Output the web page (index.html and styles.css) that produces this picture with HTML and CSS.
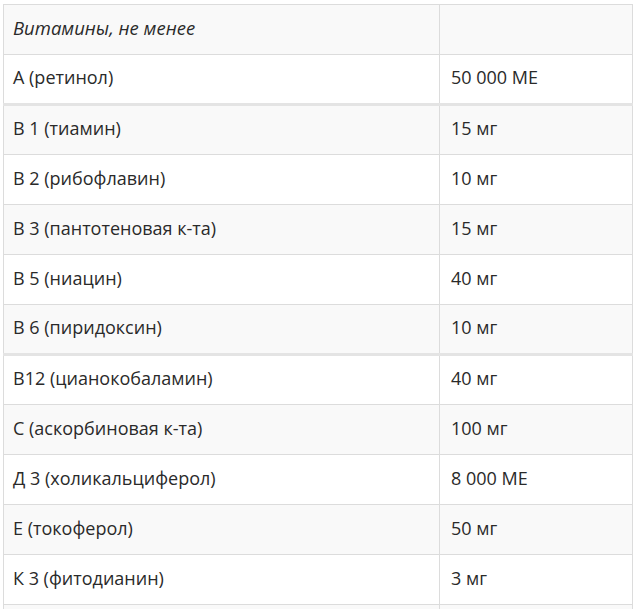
FILE: index.html
```html
<!DOCTYPE html>
<html lang="ru">
<head>
<meta charset="utf-8">
<link rel="stylesheet" href="styles.css">
</head>
<body>
<table class="vit">
<tr class="head"><td class="name"><em>Витамины, не менее</em></td><td class="val"></td></tr>
<tr class="sep"><td class="name">А (ретинол)</td><td class="val">50 000 МЕ</td></tr>
<tr><td class="name">В 1 (тиамин)</td><td class="val">15 мг</td></tr>
<tr><td class="name">В 2 (рибофлавин)</td><td class="val">10 мг</td></tr>
<tr><td class="name">В 3 (пантотеновая к-та)</td><td class="val">15 мг</td></tr>
<tr><td class="name">В 5 (ниацин)</td><td class="val">40 мг</td></tr>
<tr class="sep"><td class="name">В 6 (пиридоксин)</td><td class="val">10 мг</td></tr>
<tr><td class="name">В12 (цианокобаламин)</td><td class="val">40 мг</td></tr>
<tr><td class="name">С (аскорбиновая к-та)</td><td class="val">100 мг</td></tr>
<tr><td class="name">Д 3 (холикальциферол)</td><td class="val">8 000 МЕ</td></tr>
<tr><td class="name">Е (токоферол)</td><td class="val">50 мг</td></tr>
<tr><td class="name">К 3 (фитодианин)</td><td class="val">3 мг</td></tr>
<tr><td class="name"></td><td class="val"></td></tr>
</table>
</body>
</html>
```
FILE: styles.css
```css
html, body {
  margin: 0;
  background: #fff;
}
body {
  padding: 4px 0 0 3px;
  font-family: "Open Sans", "Liberation Sans", sans-serif;
  font-size: 18px;
  color: #2a2a2a;
}
.vit {
  border-collapse: collapse;
  width: 630px;
}
.vit td {
  border: 1px solid #dcdcdc;
  height: 50px;
  padding: 0 10px 4px 9px;
  vertical-align: middle;
  box-sizing: border-box;
}
.vit td.name {
  width: 436px;
}
.vit td.val {
  padding-left: 11px;
}
.vit tr:nth-child(odd) td {
  background: #f9f9f9;
}
.vit tr.sep td {
  border-bottom: 3px solid #e4e4e4;
  height: 50px;
}
.vit em {
  font-style: italic;
  font-size: 18.5px;
}
```
